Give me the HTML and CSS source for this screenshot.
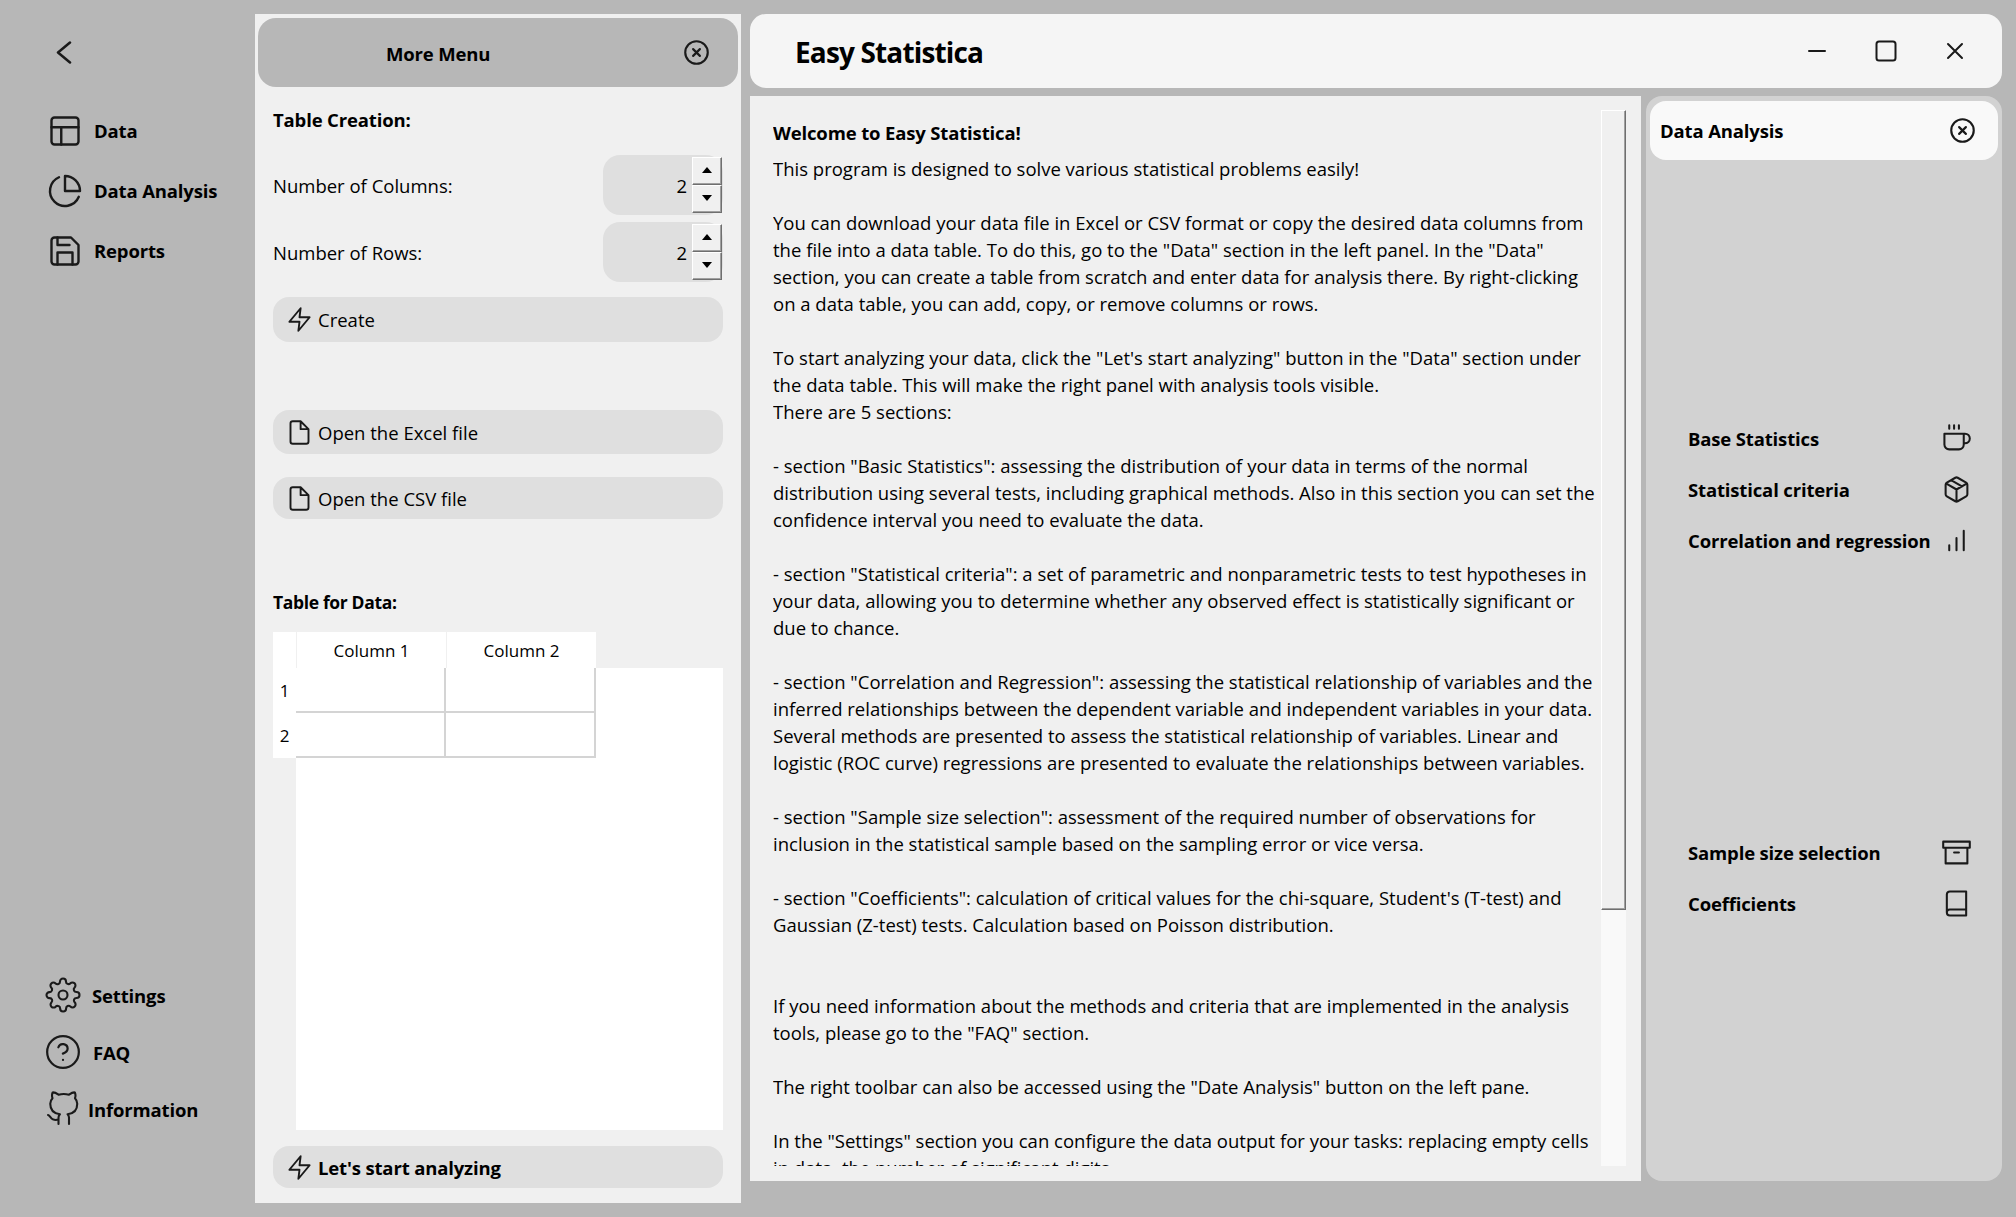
FILE: index.html
```html
<!DOCTYPE html>
<html lang="en">
<head>
<meta charset="utf-8">
<title>Easy Statistica</title>
<link rel="stylesheet" href="styles.css">
</head>
<body>
<svg class="sprites" width="0" height="0" aria-hidden="true">
  <symbol id="i-x" viewBox="0 0 24 24"><circle cx="12" cy="12" r="10"/><path d="M9 9l6 6M15 9l-6 6"/></symbol>
  <symbol id="i-bolt" viewBox="0 0 24 24"><path d="M13 2 3 14h9l-1 8 10-12h-9z"/></symbol>
  <symbol id="i-file" viewBox="0 0 24 24"><path d="M13 2H6a2 2 0 0 0-2 2v16a2 2 0 0 0 2 2h12a2 2 0 0 0 2-2V9zM13 2v7h7"/></symbol>
</svg>
<aside class="nav">
  <button class="back"><svg class="ic" viewBox="0 0 24 24"><path d="M18 2.500 6 12.500l12 10"/></svg></button>
  <div class="nav-top">
    <div class="nav-item"><svg class="ic nav-ic" viewBox="0 0 24 24"><rect x="3" y="3" width="18" height="18" rx="2"/><path d="M3 9.500h18M9.500 9.500V21"/></svg><span>Data</span></div>
    <div class="nav-item"><svg class="ic nav-ic" viewBox="0 0 24 24"><path d="M21.210 15.890A10 10 0 1 1 8 2.830"/><path d="M22 12A10 10 0 0 0 12 2v10z"/></svg><span>Data Analysis</span></div>
    <div class="nav-item"><svg class="ic nav-ic" viewBox="0 0 24 24"><path d="M19 21H5a2 2 0 0 1-2-2V5a2 2 0 0 1 2-2h11l5 5v11a2 2 0 0 1-2 2z"/><path d="M17 21v-8H7v8M7 3v5h8"/></svg><span>Reports</span></div>
  </div>
  <div class="nav-bottom">
    <div class="nav-item settings"><svg class="ic gear" viewBox="0 0 24 24"><circle cx="12" cy="12" r="3"/><path d="M19.400 15a1.650 1.650 0 0 0 .33 1.820l.06.06a2 2 0 0 1 0 2.830 2 2 0 0 1-2.830 0l-.06-.06a1.650 1.650 0 0 0-1.820-.33 1.650 1.650 0 0 0-1 1.510V21a2 2 0 0 1-2 2 2 2 0 0 1-2-2v-.09A1.650 1.650 0 0 0 9 19.400a1.650 1.650 0 0 0-1.820.33l-.06.06a2 2 0 0 1-2.830 0 2 2 0 0 1 0-2.830l.06-.06a1.650 1.650 0 0 0 .33-1.820 1.650 1.650 0 0 0-1.510-1H3a2 2 0 0 1-2-2 2 2 0 0 1 2-2h.09A1.650 1.650 0 0 0 4.600 9a1.650 1.650 0 0 0-.33-1.820l-.06-.06a2 2 0 0 1 0-2.830 2 2 0 0 1 2.830 0l.06.06a1.650 1.650 0 0 0 1.820.33H9a1.650 1.650 0 0 0 1-1.510V3a2 2 0 0 1 2-2 2 2 0 0 1 2 2v.09a1.650 1.650 0 0 0 1 1.510 1.650 1.650 0 0 0 1.820-.33l.06-.06a2 2 0 0 1 2.830 0 2 2 0 0 1 0 2.830l-.06.06a1.650 1.650 0 0 0-.33 1.820V9a1.650 1.650 0 0 0 1.510 1H21a2 2 0 0 1 2 2 2 2 0 0 1-2 2h-.09a1.650 1.650 0 0 0-1.510 1z"/></svg><span>Settings</span></div>
    <div class="nav-item settings"><svg class="ic help" viewBox="0 0 24 24"><circle cx="12" cy="12" r="10"/><path d="M9.090 9a3 3 0 0 1 5.830 1c0 2-3 3-3 3M12 17h.01"/></svg><span>FAQ</span></div>
    <div class="nav-item info"><svg class="ic hub" viewBox="0 0 24 24"><path d="M9 19c-5 1.500-5-2.500-7-3m14 6v-3.870a3.370 3.370 0 0 0-.94-2.610c3.140-.35 6.440-1.540 6.440-7A5.440 5.440 0 0 0 20 4.770 5.070 5.070 0 0 0 19.910 1S18.730.65 16 2.480a13.380 13.380 0 0 0-7 0C6.270.65 5.090 1 5.090 1A5.070 5.070 0 0 0 5 4.770a5.440 5.440 0 0 0-1.500 3.780c0 5.420 3.300 6.610 6.440 7A3.370 3.370 0 0 0 9 18.130V22"/></svg><span>Information</span></div>
  </div>
</aside>

<section class="menu">
  <header class="menu-head"><strong>More Menu</strong><svg class="ic close"><use href="#i-x"/></svg></header>
  <div class="menu-body">
    <h3 class="h-table">Table Creation:</h3>
    <div class="spin-row"><label>Number of Columns:</label>
      <div class="spin"><span>2</span><div class="arrows"><b class="up"></b><b class="down"></b></div></div></div>
    <div class="spin-row second"><label>Number of Rows:</label>
      <div class="spin"><span>2</span><div class="arrows"><b class="up"></b><b class="down"></b></div></div></div>
    <button class="btn create"><svg class="ic"><use href="#i-bolt"/></svg>Create</button>
    <button class="btn excel"><svg class="ic"><use href="#i-file"/></svg>Open the Excel file</button>
    <button class="btn csv"><svg class="ic"><use href="#i-file"/></svg>Open the CSV file</button>
    <h3 class="h-data">Table for Data:</h3>
    <div class="sheet">
      <div class="row-heads"><i></i><i>1</i><i>2</i></div>
      <div class="sheet-main">
        <div class="col-heads"><i>Column 1</i><i>Column 2</i></div>
        <div class="view">
          <div class="cells"><u></u><u></u><u></u><u></u></div>
        </div>
      </div>
    </div>
    <button class="btn start"><svg class="ic"><use href="#i-bolt"/></svg><strong>Let's start analyzing</strong></button>
  </div>
</section>

<main class="main">
  <header class="title">
    <h1>Easy Statistica</h1>
    <div class="win">
      <svg class="ic" viewBox="0 0 24 24"><path d="M4 12h16"/></svg>
      <svg class="ic" viewBox="0 0 24 24"><rect x="2.500" y="2.500" width="19" height="19" rx="2.500"/></svg>
      <svg class="ic" viewBox="0 0 24 24"><path d="M5 5l14 14M19 5 5 19"/></svg>
    </div>
  </header>
  <div class="work">
    <article class="doc">
      <div class="doc-text">
        <h2>Welcome to Easy Statistica!</h2>
        <p>This program is designed to solve various statistical problems easily!<br><br>
You can download your data file in Excel or CSV format or copy the desired data columns from<br>
the file into a data table. To do this, go to the "Data" section in the left panel. In the "Data"<br>
section, you can create a table from scratch and enter data for analysis there. By right-clicking<br>
on a data table, you can add, copy, or remove columns or rows.<br><br>
To start analyzing your data, click the "Let's start analyzing" button in the "Data" section under<br>
the data table. This will make the right panel with analysis tools visible.<br>
There are 5 sections:<br><br>
- section "Basic Statistics": assessing the distribution of your data in terms of the normal<br>
distribution using several tests, including graphical methods. Also in this section you can set the<br>
confidence interval you need to evaluate the data.<br><br>
- section "Statistical criteria": a set of parametric and nonparametric tests to test hypotheses in<br>
your data, allowing you to determine whether any observed effect is statistically significant or<br>
due to chance.<br><br>
- section "Correlation and Regression": assessing the statistical relationship of variables and the<br>
inferred relationships between the dependent variable and independent variables in your data.<br>
Several methods are presented to assess the statistical relationship of variables. Linear and<br>
logistic (ROC curve) regressions are presented to evaluate the relationships between variables.<br><br>
- section "Sample size selection": assessment of the required number of observations for<br>
inclusion in the statistical sample based on the sampling error or vice versa.<br><br>
- section "Coefficients": calculation of critical values for the chi-square, Student's (T-test) and<br>
Gaussian (Z-test) tests. Calculation based on Poisson distribution.<br><br><br>
If you need information about the methods and criteria that are implemented in the analysis<br>
tools, please go to the "FAQ" section.<br><br>
The right toolbar can also be accessed using the "Date Analysis" button on the left pane.<br><br>
In the "Settings" section you can configure the data output for your tasks: replacing empty cells<br>
in data, the number of significant digits</p>
      </div>
      <div class="scroll"><div class="thumb"></div></div>
    </article>
    <aside class="tools">
      <header class="tools-head"><strong>Data Analysis</strong><svg class="ic close"><use href="#i-x"/></svg></header>
      <div class="tool-group first">
        <div class="tool"><span>Base Statistics</span><svg class="ic" viewBox="0 0 24 24"><path d="M18 8h1a4 4 0 0 1 0 8h-1M2 8h16v9a4 4 0 0 1-4 4H6a4 4 0 0 1-4-4zM6 1v3M10 1v3M14 1v3"/></svg></div>
        <div class="tool"><span>Statistical criteria</span><svg class="ic" viewBox="0 0 24 24"><path d="M21 16V8a2 2 0 0 0-1-1.730l-7-4a2 2 0 0 0-2 0l-7 4A2 2 0 0 0 3 8v8a2 2 0 0 0 1 1.730l7 4a2 2 0 0 0 2 0l7-4A2 2 0 0 0 21 16zM3.270 6.960 12 12.010l8.730-5.050M12 22.080V12M7.500 4.270l9 5.150"/></svg></div>
        <div class="tool"><span>Correlation and regression</span><svg class="ic" viewBox="0 0 24 24"><path d="M12 20V10M18 20V4M6 20v-4"/></svg></div>
      </div>
      <div class="tool-group last">
        <div class="tool"><span>Sample size selection</span><svg class="ic" viewBox="0 0 24 24"><path d="M21 8v13H3V8M1 3h22v5H1zM10 12h4"/></svg></div>
        <div class="tool"><span>Coefficients</span><svg class="ic" viewBox="0 0 24 24"><path d="M4 19.500A2.500 2.500 0 0 1 6.500 17H20M6.500 2H20v20H6.500A2.500 2.500 0 0 1 4 19.500v-15A2.500 2.500 0 0 1 6.500 2z"/></svg></div>
      </div>
    </aside>
  </div>
</main>
</body>
</html>
```
FILE: styles.css
```css
* { box-sizing: border-box; }
html, body { margin: 0; height: 100%; }
body {
  width: 2016px; height: 1217px; overflow: hidden;
  display: flex; align-items: flex-start;
  background: #b7b7b7; color: #000;
  font-family: "Open Sans", "Noto Sans", sans-serif;
  font-size: 18.5px;
}
.sprites { position: absolute; }
.ic { fill: none; stroke: #1a1a1a; stroke-width: 2; stroke-linecap: round; stroke-linejoin: round; flex: none; }
strong, h1, h2, h3, .nav-item, .tools { font-weight: 700; letter-spacing: -0.15px; }
strong, h1, h2, h3 { margin: 0; }
button { font: inherit; letter-spacing: inherit; color: inherit; border: 0; background: none; padding: 0; text-align: left; }

/* left nav */
.nav { width: 255px; height: 1217px; display: flex; flex-direction: column; padding-top: 40px; }
.back { margin-left: 52px; height: 24px; width: 24px; display: block; }
.back .ic { width: 24px; height: 24px; stroke-width: 2.5; display: block; }
.nav-top { display: flex; flex-direction: column; gap: 29px; margin: 51px 0 0 47px; }
.nav-item { display: flex; align-items: center; height: 31px; }
.nav-ic { width: 36px; height: 36px; margin-right: 11px; stroke-width: 1.6; }
.nav-bottom { display: flex; flex-direction: column; gap: 23px; margin: auto 0 0 45px; padding-bottom: 91px; }
.gear { width: 36px; height: 36px; margin-right: 11px; stroke-width: 1.4; }
.help { width: 38px; height: 38px; margin: 0 11px 0 -1px; stroke-width: 1.4; }
.hub { width: 36px; height: 36px; margin-right: 7px; stroke-width: 1.4; }
.nav-item.settings, .nav-item.info { height: 34px; }

/* menu panel */
.menu { width: 486px; height: 1189px; margin-top: 14px; background: #f0f0f0; padding: 4px 3px 0; display: flex; flex-direction: column; }
.menu-head { height: 69px; flex: none; background: #b7b7b7; border-radius: 18px; display: flex; align-items: center; justify-content: space-between; padding: 0 28px 0 128px; }
.menu-head strong { margin-top: 2px; }
.close { width: 27px; height: 27px; stroke-width: 1.9; }
.menu-body { flex: 1; padding: 0 15px; display: flex; flex-direction: column; align-items: stretch; }
h3 { font-size: 18.5px; }
.h-table { margin-top: 19px; line-height: 27px; }
.spin-row { display: flex; align-items: center; justify-content: space-between; height: 60px; margin-top: 22px; }
.spin-row.second { margin-top: 7px; }
.spin { width: 120px; height: 60px; background: #dfdfdf; border-radius: 17px; position: relative; display: flex; align-items: center; justify-content: flex-end; padding-right: 36px; }
.arrows { position: absolute; right: 1px; top: 2px; bottom: 2px; width: 30px; display: flex; flex-direction: column; }
.arrows b { flex: 1; background: #f0f0f0; border: 1px solid; border-color: #fff #6f6f6f #6f6f6f #fff; position: relative; box-shadow: inset -1px -1px 0 #a0a0a0; }
.arrows b::after { content: ""; position: absolute; left: 9px; top: 9px; border: 5px solid transparent; }
.arrows .up::after { border-bottom: 6px solid #000; border-top: 0; }
.arrows .down::after { border-top: 6px solid #000; border-bottom: 0; }
.btn { display: flex; align-items: center; gap: 5px; height: 44px; background: #dfdfdf; border-radius: 16px; padding-left: 13px; flex: none; }
.btn .ic { width: 27px; height: 27px; stroke-width: 1.7; }
.create { margin-top: 15px; height: 45px; }
.excel { margin-top: 68px; }
.csv { margin-top: 23px; height: 42px; }
.h-data { margin-top: 71px; line-height: 24px; font-size: 17.5px; letter-spacing: -0.35px; }
.sheet { margin-top: 18px; display: flex; height: 498px; flex: none; }
.row-heads { width: 23px; display: flex; flex-direction: column; }
.row-heads i { font-style: normal; background: #fff; display: flex; align-items: center; justify-content: center; height: 45px; font-size: 17px; }
.row-heads i:first-child { height: 36px; }
.sheet-main { flex: 1; display: flex; flex-direction: column; }
.col-heads { display: flex; height: 36px; flex: none; }
.col-heads i { font-style: normal; background: #fff; width: 150px; border-left: 1px solid #f0f0f0; display: flex; align-items: center; justify-content: center; font-size: 17px; }
.view { flex: 1; background: #fff; }
.cells { display: grid; grid-template-columns: repeat(2, 150px); grid-auto-rows: 45px; width: 300px; }
.cells u { border-right: 2px solid #d4d4d4; border-bottom: 2px solid #d4d4d4; text-decoration: none; }
.start { margin-top: 16px; height: 42px; }

/* main */
.main { width: 1252px; margin: 14px 0 0 9px; display: flex; flex-direction: column; gap: 8px; }
.title { height: 74px; background: #f5f5f5; border-radius: 16px; display: flex; align-items: center; justify-content: space-between; padding: 0 35px 0 45px; }
.title h1 { font-size: 28px; letter-spacing: -0.85px; margin-top: 2px; }
.win { display: flex; gap: 45px; }
.win .ic { width: 24px; height: 24px; }
.work { display: flex; gap: 5px; height: 1085px; }
.doc { width: 891px; background: #f0f0f0; display: flex; padding: 14px 15px 15px 23px; }
.doc-text { width: 828px; height: 1056px; overflow: hidden; }
.doc-text h2 { font-size: 18.5px; line-height: 27px; margin: 9px 0; }
.doc-text p { margin: 0; line-height: 27px; white-space: nowrap; }
.scroll { width: 25px; height: 1056px; background: #f9f9f9; flex: none; }
.thumb { height: 800px; background: #f0f0f0; border: 1px solid; border-color: #fff #6f6f6f #6f6f6f #fff; box-shadow: inset -1px -1px 0 #a0a0a0; }
.tools { flex: 1; background: #d2d2d2; border-radius: 16px; padding: 5px 4px; display: flex; flex-direction: column; }
.tools-head { height: 59px; flex: none; background: #f9f9f9; border-radius: 16px; display: flex; align-items: center; justify-content: space-between; padding: 0 22px 0 10px; }
.tool-group { display: flex; flex-direction: column; gap: 25px; padding: 0 27px 0 38px; }
.tool-group.first { margin-top: 265px; }
.tool-group.last { margin-top: 286px; }
.tool { display: flex; align-items: center; justify-content: space-between; height: 26px; }
.tool .ic { width: 29px; height: 29px; stroke-width: 1.7; }
```
